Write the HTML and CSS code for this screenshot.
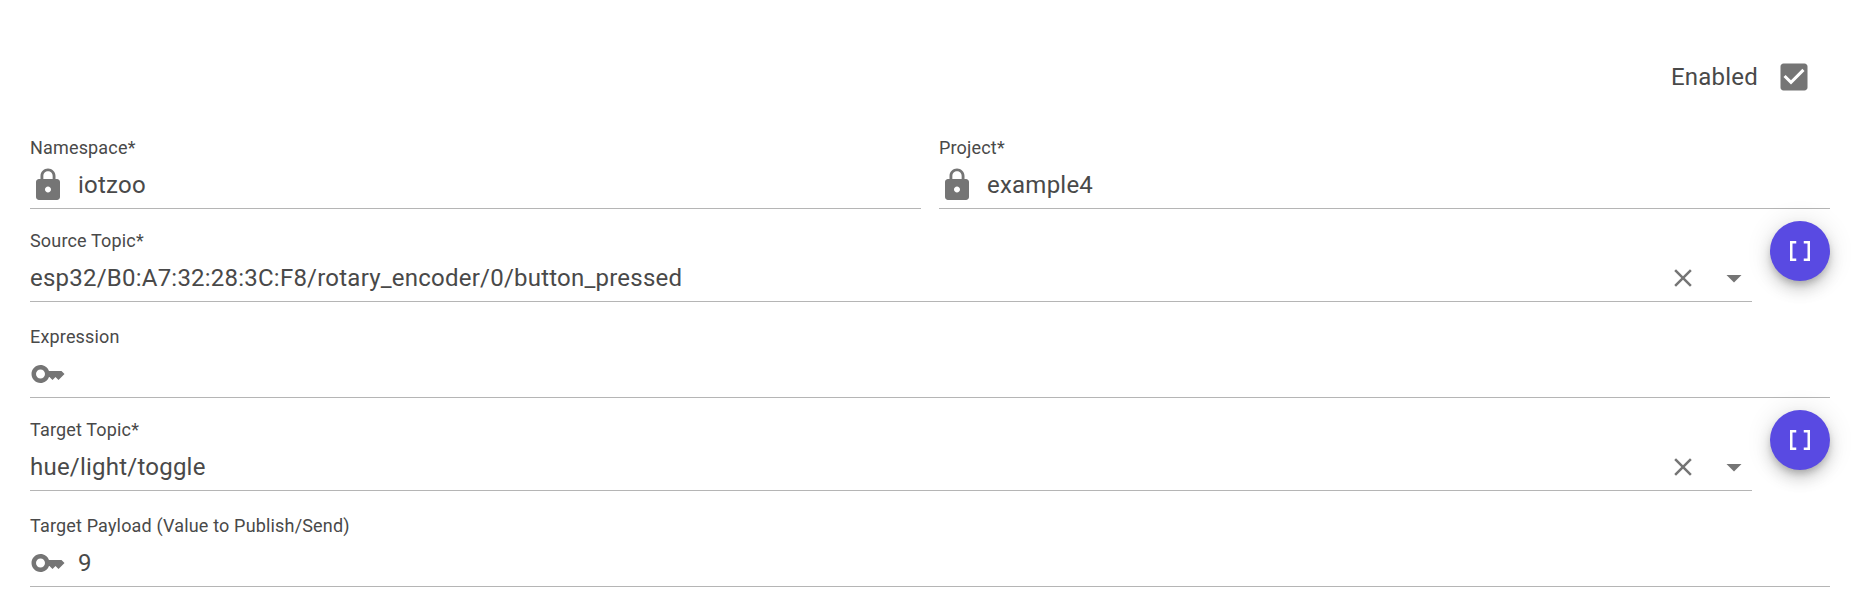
FILE: index.html
```html
<!DOCTYPE html>
<html lang="en">
<head>
<meta charset="utf-8">
<title>Rule</title>
<link rel="stylesheet" href="styles.css">
</head>
<body>
<svg class="defs" aria-hidden="true">
  <symbol id="lock" viewBox="0 0 24 24"><path d="M18 8h-1V6c0-2.760-2.240-5-5-5S7 3.240 7 6v2H6c-1.100 0-2 .9-2 2v10c0 1.100.9 2 2 2h12c1.100 0 2-.9 2-2V10c0-1.100-.9-2-2-2zm-6 9c-1.100 0-2-.9-2-2s.9-2 2-2 2 .9 2 2-.9 2-2 2zm3.100-9H8.900V6c0-1.710 1.390-3.100 3.100-3.100s3.100 1.390 3.100 3.100v2z"/></symbol>
  <symbol id="key" viewBox="0 0 24 24"><path d="M21 10h-8.350C11.830 7.670 9.610 6 7 6c-3.310 0-6 2.690-6 6s2.690 6 6 6c2.610 0 4.830-1.670 5.650-4H13l2 2 2-2 2 2 4-4.040L21 10zM7 15c-1.650 0-3-1.350-3-3s1.350-3 3-3 3 1.350 3 3-1.350 3-3 3z"/></symbol>
  <symbol id="clear" viewBox="0 0 24 24"><path d="M19 6.410L17.590 5 12 10.590 6.410 5 5 6.410 10.590 12 5 17.590 6.410 19 12 13.410 17.590 19 19 17.590 13.410 12z"/></symbol>
  <symbol id="arrow" viewBox="0 0 24 24"><path d="M7 10l5 5 5-5z"/></symbol>
  <symbol id="array" viewBox="0 0 24 24"><path d="M15 4v2h3v12h-3v2h5V4zM4 20h5v-2H6V6h3V4H4z"/></symbol>
  <symbol id="checked" viewBox="0 0 24 24"><path d="M19 3H5c-1.110 0-2 .9-2 2v14c0 1.100.89 2 2 2h14c1.110 0 2-.9 2-2V5c0-1.100-.89-2-2-2zm-9 14l-5-5 1.410-1.410L10 14.170l7.590-7.590L19 8l-9 9z"/></symbol>
</svg>
<form class="form">
  <label class="enabled">
    <span>Enabled</span>
    <svg class="checkbox"><use href="#checked"/></svg>
  </label>

  <div class="row row-split">
    <div class="field">
      <div class="label">Namespace*</div>
      <div class="control"><svg class="prefix"><use href="#lock"/></svg><span class="value">iotzoo</span></div>
    </div>
    <div class="field">
      <div class="label">Project*</div>
      <div class="control"><svg class="prefix"><use href="#lock"/></svg><span class="value">example4</span></div>
    </div>
  </div>

  <div class="row row-topic">
    <div class="field">
      <div class="label">Source Topic*</div>
      <div class="control"><span class="value">esp32/B0:A7:32:28:3C:F8/rotary_encoder/0/button_pressed</span><svg class="clear"><use href="#clear"/></svg><svg class="arrow"><use href="#arrow"/></svg></div>
    </div>
    <button class="fab" type="button" aria-label="Topics"><svg><use href="#array"/></svg></button>
  </div>

  <div class="row row-single">
    <div class="field">
      <div class="label">Expression</div>
      <div class="control"><svg class="prefix"><use href="#key"/></svg><span class="value"></span></div>
    </div>
  </div>

  <div class="row row-topic">
    <div class="field">
      <div class="label">Target Topic*</div>
      <div class="control"><span class="value">hue/light/toggle</span><svg class="clear"><use href="#clear"/></svg><svg class="arrow"><use href="#arrow"/></svg></div>
    </div>
    <button class="fab" type="button" aria-label="Topics"><svg><use href="#array"/></svg></button>
  </div>

  <div class="row row-single">
    <div class="field">
      <div class="label">Target Payload (Value to Publish/Send)</div>
      <div class="control"><svg class="prefix"><use href="#key"/></svg><span class="value">9</span></div>
    </div>
  </div>
</form>
</body>
</html>
```
FILE: styles.css
```css
body {
  margin: 0;
  background: #fff;
  color: #494949;
  font-family: Roboto, sans-serif;
}
.defs { display: none; }
.form {
  display: flex;
  flex-direction: column;
  padding: 59px 31px 0 30px;
}
.enabled {
  display: flex;
  align-items: center;
  justify-content: flex-end;
  gap: 18px;
  height: 36px;
  margin-bottom: 42px;
  padding-right: 18px;
  font-size: 24px;
  letter-spacing: 0.00938em;
}
.checkbox {
  width: 36px;
  height: 36px;
  fill: #757575;
}
.row { display: flex; gap: 18px; }
.row-topic { margin-top: 12px; }
.row-topic .field { margin-top: 9px; }
.row-single { margin-top: 24px; }
.field {
  flex: 1;
  min-width: 0;
  height: 71px;
  border-bottom: 1px solid #b5b5b5;
}
.label {
  height: 22px;
  font-size: 18px;
  line-height: 22px;
  letter-spacing: 0.00938em;
}
.control {
  display: flex;
  align-items: center;
  height: 36px;
  margin-top: 8px;
  font-size: 24px;
  letter-spacing: 0.00938em;
}
.value { flex: 1; line-height: 36px; }
.prefix {
  width: 36px;
  height: 36px;
  margin-right: 12px;
  fill: #757575;
}
.clear {
  width: 30px;
  height: 30px;
  margin-right: 18px;
  fill: #757575;
}
.arrow {
  width: 36px;
  height: 36px;
  fill: #757575;
}
.fab {
  display: flex;
  align-items: center;
  justify-content: center;
  width: 60px;
  height: 60px;
  padding: 0;
  border: 0;
  border-radius: 50%;
  background: #594ae2;
  box-shadow: 0 4.5px 7.5px -1.5px rgba(0,0,0,.2), 0 9px 15px 0 rgba(0,0,0,.14), 0 1.5px 27px 0 rgba(0,0,0,.12);
}
.fab svg { width: 30px; height: 30px; fill: #fff; }
```
